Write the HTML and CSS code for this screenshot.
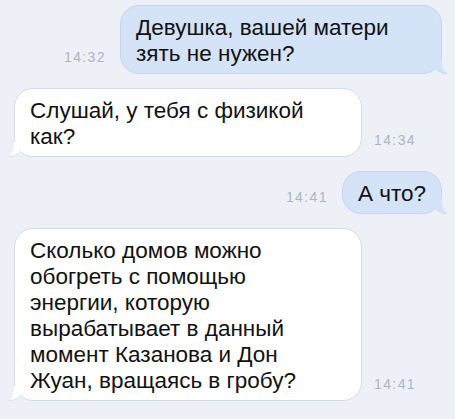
FILE: index.html
```html
<!DOCTYPE html>
<html lang="ru">
<head>
  <meta charset="UTF-8">
  <title>Сообщения</title>
  <meta name="viewport" content="width=device-width, initial-scale=1.0">
  <link rel="stylesheet" href="styles.css">
</head>
<body>

  <div class="chat">
    <div class="riga uscita">
      <span class="ora">14:32</span>
      <div class="bolla blu largo-1">Девушка, вашей матери<br>зять не нужен?</div>
    </div>

    <div class="riga entrata">
      <div class="bolla bianca largo-2">Слушай, у тебя с физикой<br>как?</div>
      <span class="ora">14:34</span>
    </div>

    <div class="riga uscita">
      <span class="ora">14:41</span>
      <div class="bolla blu">А что?</div>
    </div>

    <div class="riga entrata">
      <div class="bolla bianca largo-2">Сколько домов можно<br>обогреть с помощью<br>энергии, которую<br>вырабатывает в данный<br>момент Казанова и Дон<br>Жуан, вращаясь в гробу?</div>
      <span class="ora">14:41</span>
    </div>
  </div>

</body>
</html>
```

FILE: styles.css
```css
body {
  margin: 0;
  padding: 0;
  background: #edf1f7;
  font-family: "Liberation Sans", Arial, sans-serif;
  color: #111;
}

.chat {
  display: flex;
  flex-direction: column;
  gap: 14px;
  padding: 5px 13px 0 14px;
}

.riga {
  display: flex;
  align-items: flex-end;
}

.uscita {
  justify-content: flex-end;
}

.ora {
  font-size: 14px;
  line-height: 14px;
  letter-spacing: 1.4px;
  color: #aeb3bc;
  margin-bottom: 10px;
}

.uscita .ora {
  margin-right: 14px;
}

.entrata .ora {
  margin-left: 12px;
}

.bolla {
  position: relative;
  box-sizing: border-box;
  padding: 9px 15px 6px;
  font-size: 22.5px;
  line-height: 26px;
  border-radius: 19px;
  white-space: nowrap;
}

.blu {
  background: #d4e3f8;
  border: 1px solid #c5d5ec;
}

.bianca {
  background: #fff;
  border: 1px solid #d6dce5;
}

.largo-1 {
  width: 322px;
}

.largo-2 {
  width: 348px;
}

/* codina della bolla */
.bolla::after {
  content: "";
  position: absolute;
  bottom: -1px;
  width: 12px;
  height: 14px;
}

.blu::after {
  right: -6px;
  background: #d4e3f8;
  border-bottom-left-radius: 14px 10px;
  border-bottom: 1px solid #c5d5ec;
}

.bianca::after {
  left: -6px;
  background: #fff;
  border-bottom-right-radius: 14px 10px;
  border-bottom: 1px solid #d6dce5;
}

.bolla::before {
  content: "";
  position: absolute;
  bottom: -1px;
  width: 8px;
  height: 16px;
  background: #edf1f7;
  z-index: 1;
}

.blu::before {
  right: -9px;
  border-bottom-left-radius: 9px 12px;
}

.bianca::before {
  left: -9px;
  border-bottom-right-radius: 9px 12px;
}
```
